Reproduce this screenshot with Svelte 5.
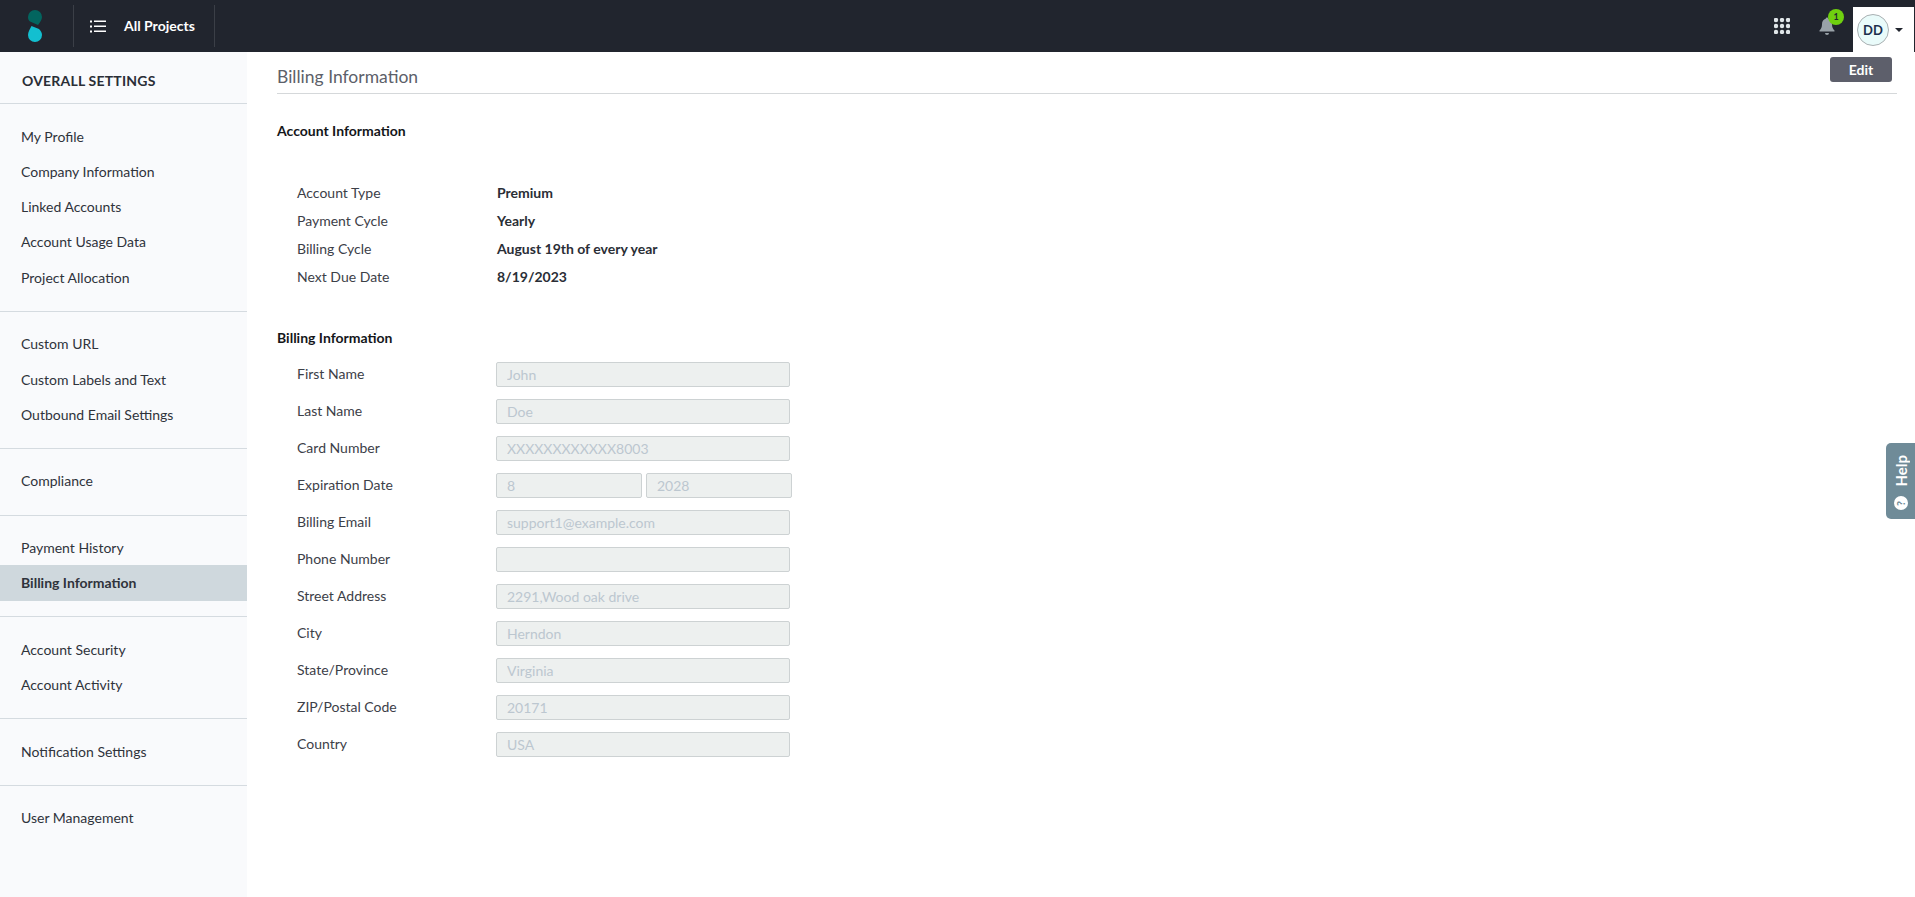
<script>
  const navGroups = [
    ['My Profile', 'Company Information', 'Linked Accounts', 'Account Usage Data', 'Project Allocation'],
    ['Custom URL', 'Custom Labels and Text', 'Outbound Email Settings'],
    ['Compliance'],
    ['Payment History', 'Billing Information'],
    ['Account Security', 'Account Activity'],
    ['Notification Settings'],
    ['User Management']
  ];
  const active = 'Billing Information';

  const account = [
    ['Account Type', 'Premium'],
    ['Payment Cycle', 'Yearly'],
    ['Billing Cycle', 'August 19th of every year'],
    ['Next Due Date', '8/19/2023']
  ];

  const billing = [
    ['First Name', ['John']],
    ['Last Name', ['Doe']],
    ['Card Number', ['XXXXXXXXXXXX8003']],
    ['Expiration Date', ['8', '2028']],
    ['Billing Email', ['support1@example.com']],
    ['Phone Number', ['']],
    ['Street Address', ['2291,Wood oak drive']],
    ['City', ['Herndon']],
    ['State/Province', ['Virginia']],
    ['ZIP/Postal Code', ['20171']],
    ['Country', ['USA']]
  ];
</script>

<div class="page">
  <header class="topbar">
    <div class="logo">
      <svg width="14" height="32" viewBox="0 0 14 32" aria-hidden="true">
        <path d="M7 0a7 7 0 0 1 7 7c0 3-2 5-4 8L2 11.500C.8 10.500 0 9 0 7a7 7 0 0 1 7-7z" fill="#03655f" />
        <path d="M3.500 16L11 19c2 2 3 4 3 6a7 7 0 0 1-14 0c0-3 2-6 3.500-9z" fill="#13bfd0" />
      </svg>
    </div>
    <div class="projects">
      <svg width="16" height="13" viewBox="0 0 16 13" aria-hidden="true">
        <g fill="#fff">
          <rect x="0" y="0.500" width="2" height="2" />
          <rect x="4" y="0.500" width="12" height="1.500" />
          <rect x="0" y="5.500" width="2" height="2" />
          <rect x="4" y="5.500" width="12" height="1.500" />
          <rect x="0" y="10.500" width="2" height="2" />
          <rect x="4" y="10.500" width="12" height="1.500" />
        </g>
      </svg>
      <span>All Projects</span>
    </div>
    <div class="spacer"></div>
    <svg class="grid-icon" width="16" height="16" viewBox="0 0 16 16" aria-hidden="true">
      <g fill="#dfe5e8">
        {#each [2, 8, 14] as cy}
          {#each [2, 8, 14] as cx}
            <circle {cx} {cy} r="2.200" />
          {/each}
        {/each}
      </g>
    </svg>
    <div class="bell">
      <svg width="16" height="18" viewBox="0 0 16 18" aria-hidden="true">
        <path d="M8 0.500c.8 0 1.300.6 1.300 1.300 2.500.7 3.700 2.800 3.700 5.400 0 3 .8 4.500 2.500 6.300v1H.5v-1C2.200 11.700 3 10.200 3 7.200c0-2.600 1.200-4.700 3.700-5.400C6.700 1.100 7.200.5 8 .5zM6 16h4a2 2 0 0 1-4 0z" fill="#99a2a8" />
      </svg>
      <span class="badge">1</span>
    </div>
    <div class="user">
      <span class="avatar">DD</span>
      <span class="caret"></span>
    </div>
  </header>

  <div class="body">
    <aside class="sidebar">
      <h2>OVERALL SETTINGS</h2>
      {#each navGroups as group}
        <ul>
          {#each group as item}
            <li class:active={item === active}>{item}</li>
          {/each}
        </ul>
      {/each}
    </aside>

    <main class="content">
      <div class="title-row">
        <h1>Billing Information</h1>
        <button type="button" class="edit">Edit</button>
      </div>

      <h3 class="account-head">Account Information</h3>
      <dl class="account">
        {#each account as [label, value]}
          <div class="account-row">
            <dt>{label}</dt>
            <dd>{value}</dd>
          </div>
        {/each}
      </dl>

      <h3 class="billing-head">Billing Information</h3>
      <div class="form">
        {#each billing as [label, values]}
          <div class="form-row">
            <span class="label">{label}</span>
            <div class="inputs" class:pair={values.length > 1}>
              {#each values as value}
                <input type="text" {value} disabled aria-label={label} />
              {/each}
            </div>
          </div>
        {/each}
      </div>
    </main>
  </div>

  <div class="help">
    <span class="help-mark">?</span>
    <span>Help</span>
  </div>
</div>

<style>
  :global(body) {
    margin: 0;
    background: #fff;
    font-family: Lato, "Open Sans", sans-serif;
    color: #272b33;
  }

  .page {
    position: relative;
    height: 897px;
    overflow: hidden;
    display: flex;
    flex-direction: column;
  }

  .topbar {
    flex: 0 0 52px;
    display: flex;
    align-items: center;
    background: #21252e;
    color: #fff;
  }

  .logo {
    width: 74px;
    height: 42px;
    padding: 0 0 0 28px;
    box-sizing: border-box;
    display: flex;
    align-items: center;
    border-right: 1px solid #3b3f47;
  }

  .projects {
    display: flex;
    align-items: center;
    gap: 18px;
    height: 42px;
    padding: 0 19px 0 16px;
    border-right: 1px solid #3b3f47;
    font-size: 14px;
    font-weight: 700;
    line-height: 40px;
  }

  .spacer {
    flex: 1;
  }

  .grid-icon {
    margin-right: 29px;
  }

  .bell {
    position: relative;
    display: flex;
    margin-right: 18px;
  }

  .badge {
    position: absolute;
    top: -8px;
    left: 9px;
    width: 16px;
    height: 16px;
    border-radius: 50%;
    background: #6fd00f;
    color: #21252e;
    font-size: 9px;
    font-weight: 700;
    line-height: 16px;
    text-align: center;
  }

  .user {
    align-self: flex-end;
    width: 61px;
    height: 45px;
    background: #fff;
    display: flex;
    align-items: center;
    gap: 6px;
    padding-left: 4px;
    box-sizing: border-box;
    margin-right: 1px;
  }

  .avatar {
    width: 30px;
    height: 30px;
    border-radius: 50%;
    border: 1.500px solid #a9b0b2;
    background: #e9fbfa;
    color: #1d2f4d;
    font-size: 13px;
    font-weight: 700;
    line-height: 30px;
    text-align: center;
  }

  .caret {
    width: 0;
    height: 0;
    border-left: 4px solid transparent;
    border-right: 4px solid transparent;
    border-top: 4px solid #21252e;
  }

  .body {
    flex: 1;
    display: flex;
    min-height: 0;
  }

  .sidebar {
    flex: 0 0 247px;
    background: #f9fafc;
  }

  .sidebar h2 {
    margin: 0;
    height: 51px;
    box-sizing: border-box;
    padding: 5px 0 0 22px;
    display: flex;
    align-items: center;
    font-size: 14px;
    font-weight: 700;
    letter-spacing: 0.2px;
    color: #2a2e36;
  }

  .sidebar ul {
    margin: 0;
    padding: 14.500px 0 15.800px;
    list-style: none;
    border-top: 1px solid #d5dbe0;
  }

  .sidebar li {
    height: 35.300px;
    line-height: 35.300px;
    padding-left: 21px;
    font-size: 14px;
    color: #2f333b;
  }

  .sidebar li.active {
    background: #cfd8dd;
    font-weight: 700;
  }

  .content {
    flex: 1;
    min-width: 0;
    padding: 0 18px 0 30px;
  }

  .title-row {
    position: relative;
    height: 41px;
    border-bottom: 1px solid #d5d8da;
    display: flex;
    align-items: flex-end;
  }

  h1 {
    margin: 0 0 4px;
    font-size: 17.500px;
    font-weight: 400;
    color: #5c6069;
    line-height: 24px;
  }

  .edit {
    position: absolute;
    right: 5px;
    top: 5px;
    width: 62px;
    height: 25px;
    padding: 0;
    border: 0;
    border-radius: 3px;
    background: #5d5f6b;
    color: #fff;
    font: 700 14px Lato, sans-serif;
  }

  h3 {
    margin: 0;
    font-size: 14px;
    font-weight: 700;
    color: #14161a;
    line-height: 20px;
  }

  .account-head {
    margin-top: 27px;
  }

  .account {
    margin: 37px 0 0;
    padding-left: 20px;
  }

  .account-row {
    display: flex;
    height: 28px;
    align-items: center;
    font-size: 14px;
  }

  dt {
    width: 200px;
    color: #3c4048;
  }

  dd {
    margin: 0;
    font-weight: 700;
    color: #2a2e36;
  }

  .billing-head {
    margin-top: 38px;
  }

  .form {
    margin-top: 7px;
    padding-left: 20px;
  }

  .form-row {
    display: flex;
    align-items: center;
    height: 37px;
    font-size: 14px;
  }

  .label {
    width: 199px;
    color: #3c4048;
  }

  .inputs {
    display: flex;
    gap: 4px;
    width: 294px;
    padding-top: 2px;
  }

  .inputs.pair {
    width: 296px;
  }

  input {
    flex: 1;
    min-width: 0;
    height: 25px;
    box-sizing: border-box;
    padding: 0 10px;
    border: 1px solid #cdd2d3;
    border-radius: 2px;
    background: #edf0ef;
    color: #bcc7d0;
    font: 400 14px Lato, sans-serif;
    opacity: 1;
    -webkit-text-fill-color: #bcc7d0;
  }

  .help {
    position: absolute;
    right: 0;
    top: 443px;
    width: 29px;
    height: 76px;
    box-sizing: border-box;
    padding: 4px 0 9px;
    background: #6f8b98;
    border-radius: 5px 0 0 5px;
    color: #fff;
    font-size: 15px;
    font-weight: 700;
    writing-mode: vertical-rl;
    display: flex;
    flex-direction: row-reverse;
    align-items: center;
    justify-content: flex-start;
    gap: 9px;
  }

  .help > span {
    transform: rotate(180deg);
  }

  .help-mark {
    width: 14px;
    height: 14px;
    border-radius: 50%;
    background: #fff;
    color: #6f8b98;
    font-size: 11px;
    line-height: 14px;
    text-align: center;
  }
</style>
